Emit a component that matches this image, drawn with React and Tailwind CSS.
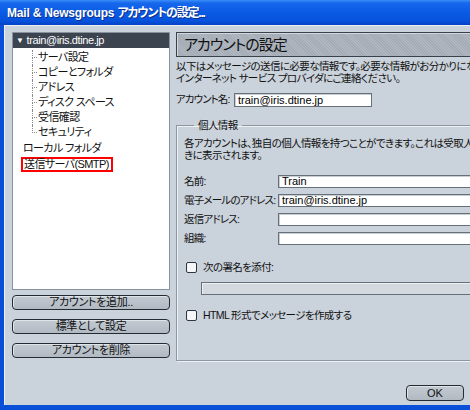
import React from "react";

const font = "font-['Liberation_Sans','Noto_Sans_CJK_JP',sans-serif] [font-feature-settings:'palt']";

function SubItem({ text, last }) {
  return (
    <div className="flex h-[15px]">
      <div className="w-[5px] flex flex-col">
        <div className="flex-1 border-l border-b border-dotted border-[#8a8a8a]" />
        <div className={last ? "flex-1" : "flex-1 border-l border-dotted border-[#8a8a8a]"} />
      </div>
      <span className="ml-[1px] leading-[15px] whitespace-nowrap">{text}</span>
    </div>
  );
}

function Btn({ children, className = "" }) {
  return (
    <div
      className={
        "flex items-center justify-center h-[15px] rounded-[4px] border border-[#262b31] bg-[linear-gradient(#c3cad2,#b1b9c2)] shadow-[inset_1px_1px_0_#dfe4e9] text-[11px] tracking-[-0.3px] leading-none text-[#111] " +
        className
      }
    >
      {children}
    </div>
  );
}

function Field({ label, value }) {
  return (
    <div className="flex items-center h-[13px]">
      <span className="w-[94px] shrink-0 whitespace-nowrap tracking-[-0.8px]">{label}</span>
      <div className="flex-1 h-[13px] bg-white border border-[#66707a] shadow-[inset_1px_1px_0_#c9ced4] px-[3px] text-[11px] tracking-normal leading-[11px] text-black">
        {value}
      </div>
    </div>
  );
}

function Check({ label }) {
  return (
    <div className="flex items-center h-[11px] ml-[2px]">
      <div className="w-[11px] h-[11px] rounded-[2px] border border-[#2f353c] bg-[#f4f6f8]" />
      <span className="ml-[6px] whitespace-nowrap">{label}</span>
    </div>
  );
}

export default function App() {
  return (
    <div className={"w-[470px] h-[410px] overflow-hidden flex flex-col bg-[#0a4fd8] " + font}>
      {/* Title bar */}
      <div className="h-[25px] shrink-0 flex items-center pl-[7px] bg-[linear-gradient(#3b8ef6_0px,#1668ec_3px,#0b5be4_12px,#0752dc_21px,#0442c4_25px)]">
        <span className="text-white font-bold text-[12px] leading-none whitespace-nowrap tracking-[-0.2px] [text-shadow:1px_1px_0_#0a2e8c]">
          Mail &amp; Newsgroups <span className="tracking-[-1.2px]">アカウントの設定...</span>
        </span>
      </div>

      {/* Body */}
      <div className="flex-1 ml-[4px] mb-[5px] bg-[#cad2db] border-l border-t border-[#eef1f4] flex text-[10.5px] tracking-[-0.6px] text-[#111]">
        {/* Left column */}
        <div className="w-[158px] ml-[7px] pt-[6px] flex flex-col shrink-0">
          <div className="h-[258px] bg-white border border-[#89929c] flex flex-col text-[11px]">
            <div className="h-[15px] bg-[#3b444f] flex items-center pl-[3px] text-white tracking-[-0.4px]">
              <span className="text-[8px] leading-none mr-[3px]">▼</span>
              <span className="leading-none">train@iris.dtine.jp</span>
            </div>
            <div className="pl-[19px] mt-[2px]">
              <SubItem text="サーバ設定" />
              <SubItem text="コピーとフォルダ" />
              <SubItem text="アドレス" />
              <SubItem text="ディスク スペース" />
              <SubItem text="受信確認" />
              <SubItem text="セキュリティ" last />
            </div>
            <div className="pl-[10px] h-[15px] leading-[15px] mt-[1px]">ローカル フォルダ</div>
            <div className="pl-[8px]">
              <div className="inline-flex items-center h-[15px] border-2 border-[#ff0000] pl-[1px] pr-[2px] leading-none">
                送信サーバ(SMTP)
              </div>
            </div>
          </div>
          <Btn className="mt-[5px]">アカウントを追加..</Btn>
          <Btn className="mt-[9px]">標準として設定</Btn>
          <Btn className="mt-[9px]">アカウントを削除</Btn>
        </div>

        {/* Right column */}
        <div className="ml-[6px] w-[300px] shrink-0 pt-[6px] flex flex-col">
          <div className="h-[25px] border border-[#39414b] bg-[#a8b0ba] bg-[repeating-linear-gradient(45deg,#a3abb5_0px,#a3abb5_1px,#b0b7c0_1px,#b0b7c0_2px)] shadow-[inset_1px_1px_0_#d2d7dd] flex items-center pl-[7px] text-[15px] tracking-[-1px] leading-none text-[#111]">
            アカウントの設定
          </div>
          <div className="mt-[3px] leading-[12px] whitespace-nowrap">
            <div>以下はメッセージの送信に必要な情報です。必要な情報がお分かりになら</div>
            <div>インターネット サービス プロバイダにご連絡ください。</div>
          </div>
          <div className="mt-[9px] flex items-center h-[14px]">
            <span className="w-[58px] shrink-0 whitespace-nowrap tracking-[-0.9px]">アカウント名:</span>
            <div className="w-[138px] h-[14px] bg-white border border-[#66707a] shadow-[inset_1px_1px_0_#c9ced4] px-[3px] text-[11px] tracking-normal leading-[12px] text-black">
              train@iris.dtine.jp
            </div>
          </div>

          <fieldset className="mt-[12px] border border-[#8d97a1] shadow-[inset_1px_1px_0_#eef1f4,1px_1px_0_#eef1f4] pl-[7px] pb-[39px] min-w-0">
            <legend className="ml-[10px] px-[4px] leading-[12px]">個人情報</legend>
            <div className="mt-[6px] leading-[12px] whitespace-nowrap">
              <div>各アカウントは、独自の個人情報を持つことができます。これは受取人が</div>
              <div>きに表示されます。</div>
            </div>
            <div className="mt-[14px] flex flex-col gap-[6px]">
              <Field label="名前:" value="Train" />
              <Field label="電子メールのアドレス:" value="train@iris.dtine.jp" />
              <Field label="返信アドレス:" value="" />
              <Field label="組織:" value="" />
            </div>
            <div className="mt-[17px]">
              <Check label="次の署名を添付:" />
            </div>
            <div className="mt-[9px] ml-[17px] h-[13px] border border-[#66707a] bg-[#d3d9df] shadow-[inset_1px_1px_0_#eef1f4]" />
            <div className="mt-[15px]">
              <Check label="HTML 形式でメッセージを作成する" />
            </div>
          </fieldset>

          <div className="mt-[24px] flex">
            <Btn className="ml-[230px] w-[58px] h-[16px] tracking-normal">OK</Btn>
          </div>
        </div>
      </div>
    </div>
  );
}
